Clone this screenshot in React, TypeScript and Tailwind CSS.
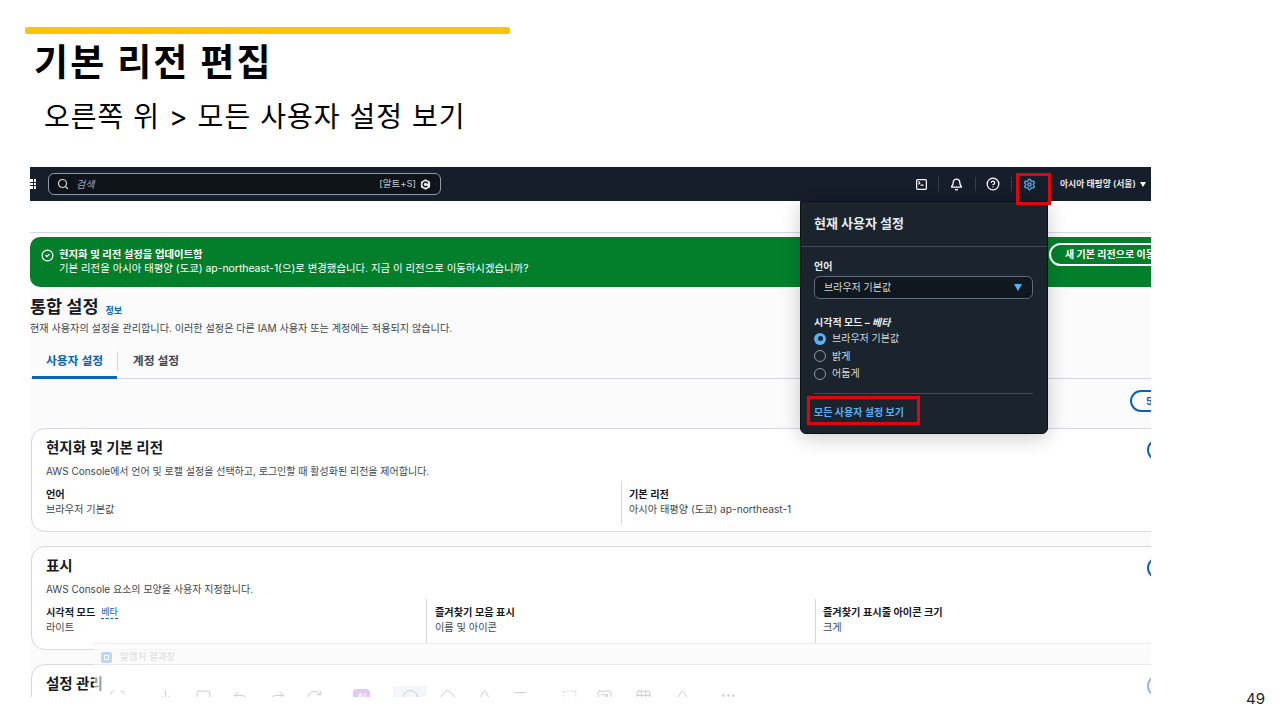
/**
 * Slide: editing the default region, with the AWS console settings screenshot.
 */
import {
  Search,
  SquareTerminal,
  Bell,
  CircleHelp,
  Settings,
  CircleCheck,
  Scan,
  Download,
  Square,
  Undo2,
  Redo2,
  RotateCw,
  Circle,
  Diamond,
  Menu,
  SquareDashed,
  SquareArrowUpRight,
  Grid3x3,
  Triangle,
  Ellipsis,
} from "lucide-react";

const font = "font-['Inter','Noto_Sans_CJK_KR',sans-serif]";

function Field({ label, value, badge }: { label: string; value: string; badge?: string }) {
  return (
    <div className="flex flex-col">
      <div className="flex items-center gap-[6px] text-[10.2px] leading-[14px] font-bold text-[#16191f]">
        {label}
        {badge && (
          <span className="font-normal text-[9px] leading-[12px] text-[#0b5fb0] border-b border-dashed border-[#0b5fb0]">
            {badge}
          </span>
        )}
      </div>
      <div className="mt-[1px] text-[10.2px] leading-[15px] text-[#414750]">{value}</div>
    </div>
  );
}

function Card({
  title,
  desc,
  children,
}: {
  title: string;
  desc?: string;
  children?: React.ReactNode;
}) {
  return (
    <section className="relative ml-[1px] h-[104px] w-[1140px] shrink-0 rounded-[14px] border border-[#d5d8dc] bg-white pl-[14px] pt-[8px]">
      <h3 className="text-[14.5px] leading-[22px] font-bold text-[#16191f]">{title}</h3>
      {desc && <p className="mt-[5px] text-[10px] leading-[14px] text-[#414750]">{desc}</p>}
      {children}
      <span className="absolute left-[1115px] top-[10px] h-[22px] w-[30px] rounded-full border-2 border-[#0b64b5]" />
    </section>
  );
}

function Radio({ label, checked }: { label: string; checked?: boolean }) {
  return (
    <div className="flex h-[17.5px] items-center gap-[6px] text-[10px] text-[#d5dbdb]">
      {checked ? (
        <span className="flex h-[12px] w-[12px] items-center justify-center rounded-full bg-[#54b3f5]">
          <span className="h-[5px] w-[5px] rounded-full bg-[#1b232d]" />
        </span>
      ) : (
        <span className="h-[12px] w-[12px] rounded-full border border-[#8d99a8]" />
      )}
      {label}
    </div>
  );
}

function Popover() {
  return (
    <div className="absolute left-[770px] top-[34px] z-10 h-[233px] w-[248px] rounded-b-[6px] border border-[#0c1118] bg-[#1b232d] text-white shadow-[0_4px_20px_rgba(0,0,0,0.2)]">
      <div className="flex h-[45px] items-center border-b border-[#414d5c] pl-[13px] text-[13px] font-bold text-[#e9ebed]">
        현재 사용자 설정
      </div>
      <div className="px-[13px] pt-[12px]">
        <div className="text-[10px] leading-[14px] font-bold text-[#e9ebed]">언어</div>
        <div className="mt-[3px] flex h-[23px] w-[219px] items-center justify-between rounded-[6px] border border-[#5f6b7a] bg-[#10171f] pl-[9px] pr-[10px] text-[10px] text-[#d5dbdb]">
          브라우저 기본값
          <span className="h-0 w-0 border-x-[4.5px] border-t-[7px] border-x-transparent border-t-[#54b3f5]" />
        </div>
        <div className="mt-[16px] text-[10px] leading-[14px] font-bold text-[#e9ebed]">
          시각적 모드 – <span className="italic">베타</span>
        </div>
        <div className="mt-[1px]">
          <Radio label="브라우저 기본값" checked />
          <Radio label="밝게" />
          <Radio label="어둡게" />
        </div>
        <div className="mt-[10px] w-[219px] border-t border-[#414d5c] pt-[11px] text-[10px] leading-[14px] font-bold text-[#54b3f5]">
          모든 사용자 설정 보기
        </div>
      </div>
    </div>
  );
}

function TopBar() {
  return (
    <header className="flex h-[34px] shrink-0 items-center bg-[#161d2b] text-white">
      <div className="grid w-[6px] grid-cols-2 gap-[1px]">
        {Array.from({ length: 6 }).map((_, i) => (
          <span key={i} className="h-[2.5px] w-[2.5px] bg-white" />
        ))}
      </div>
      <div className="ml-[12px] flex h-[22px] w-[393px] items-center rounded-[6px] border border-[#8d99a8] bg-[#0f141a] pl-[8px] pr-[9px]">
        <Search className="h-[12px] w-[12px] text-[#d5dbdb]" strokeWidth={2.4} />
        <span className="ml-[7px] text-[10px] italic text-[#9ba7b6]">검색</span>
        <span className="ml-auto text-[9.5px] text-[#c6c9cc]">[알트+S]</span>
        <svg viewBox="0 0 12 12" className="ml-[4px] h-[11px] w-[11px]">
          <path d="M6 0.3 11 3v6l-5 2.7L1 9V3z" fill="#e9ebed" />
          <path d="M8 7.6A2.6 2.6 0 1 1 8.4 5" fill="none" stroke="#0f141a" strokeWidth="1.6" />
        </svg>
      </div>
      <SquareTerminal className="ml-[474px] h-[13px] w-[13px]" strokeWidth={2.2} />
      <span className="ml-[10px] h-[14px] w-px bg-[#333c49]" />
      <Bell className="ml-[11px] h-[13px] w-[13px]" strokeWidth={2.4} />
      <span className="ml-[12px] h-[14px] w-px bg-[#333c49]" />
      <CircleHelp className="ml-[10px] h-[14px] w-[14px]" strokeWidth={2.2} />
      <span className="ml-[11px] h-[14px] w-px bg-[#333c49]" />
      <Settings className="ml-[11px] h-[13px] w-[13px] text-[#54b3f5]" strokeWidth={2.4} />
      <span className="ml-[24px] text-[8.8px] font-semibold text-[#e9ebed]">아시아 태평양 (서울)</span>
      <span className="ml-[4px] h-0 w-0 border-x-[3.5px] border-t-[5px] border-x-transparent border-t-white" />
    </header>
  );
}

function Toolbar() {
  const cls = "h-[17px] w-[17px]";
  return (
    <div className="absolute left-[64px] top-[476px] z-[5] h-[70px] w-[1057px] border-t border-[#ececec] bg-white/55">
      <div className="flex h-[21px] items-center border-b border-[#e9e9e9] bg-[#fafafa]/60 pl-[7px] pt-[7px]">
        <span className="flex h-[11px] w-[11px] items-center justify-center rounded-[2px] bg-[#bcd6f3]">
          <span className="h-[5px] w-[5px] border border-white" />
        </span>
        <span className="ml-[8px] text-[9.5px] text-[#dcdcdc]">알캡처 결과창</span>
      </div>
      <div className="flex items-center pl-[15px] pt-[21px] text-[#c9c9c9]">
        <Scan className={cls} strokeWidth={1.3} />
        <Download className={`${cls} ml-[31px]`} strokeWidth={1.3} />
        <Square className={`${cls} ml-[21px]`} strokeWidth={1.3} />
        <Undo2 className={`${cls} ml-[20px]`} strokeWidth={1.3} />
        <Redo2 className={`${cls} ml-[20px]`} strokeWidth={1.3} />
        <RotateCw className={`${cls} ml-[20px]`} strokeWidth={1.3} />
        <span className="ml-[30px] flex h-[17px] w-[17px] items-center justify-center rounded-[4px] bg-[#e2c8f7] text-[9px] font-bold text-white">
          Ai
        </span>
        <span className="ml-[23px] flex h-[22px] w-[34px] items-center justify-center bg-[#f3f7fb]">
          <Circle className={cls} strokeWidth={1.3} />
        </span>
        <Diamond className={`${cls} ml-[12px]`} strokeWidth={1.3} />
        <Triangle className={`${cls} ml-[20px]`} strokeWidth={1.3} />
        <Menu className={`${cls} ml-[19px]`} strokeWidth={1.3} />
        <SquareDashed className={`${cls} ml-[32px]`} strokeWidth={1.3} />
        <SquareArrowUpRight className={`${cls} ml-[18px]`} strokeWidth={1.3} />
        <Grid3x3 className={`${cls} ml-[22px]`} strokeWidth={1.3} />
        <Triangle className={`${cls} ml-[22px]`} strokeWidth={1.3} />
        <Ellipsis className={`${cls} ml-[29px] -mt-[4px]`} strokeWidth={1.5} />
      </div>
    </div>
  );
}

function ConsoleShot() {
  return (
    <div className="relative ml-[30px] flex h-[530px] w-[1121px] flex-col overflow-hidden bg-[#fbfbfb]">
      <TopBar />
      <div className="h-[32px] shrink-0 border-b border-[#d5d8dc] bg-white" />
      <div className="mt-[4px] flex h-[50px] w-[1121px] shrink-0 items-start rounded-l-[10px] bg-[#037f2c] pl-[11px] pt-[11px] text-white">
        <CircleCheck className="mt-[1px] h-[13px] w-[13px]" strokeWidth={2.2} />
        <div className="ml-[5px] text-[10.4px] leading-[14px]">
          <div className="font-bold">현지화 및 리전 설정을 업데이트함</div>
          <div>기본 리전을 아시아 태평양 (도쿄) ap-northeast-1(으)로 변경했습니다. 지금 이 리전으로 이동하시겠습니까?</div>
        </div>
        <span className="ml-auto mt-[-5px] mr-[-58px] flex h-[23px] w-[160px] items-center whitespace-nowrap rounded-full border-2 border-white pl-[14px] text-[10px] font-bold">
          새 기본 리전으로 이동
        </span>
      </div>
      <div className="flex h-[33px] shrink-0 items-end gap-[7px] pb-[1px]">
        <h1 className="text-[17.5px] leading-[24px] font-bold text-[#16191f]">통합 설정</h1>
        <span className="pb-[2px] text-[9px] font-bold text-[#0b64b5]">정보</span>
      </div>
      <p className="mt-[1px] text-[10.15px] leading-[15px] text-[#414750]">
        현재 사용자의 설정을 관리합니다. 이러한 설정은 다른 IAM 사용자 또는 계정에는 적용되지 않습니다.
      </p>
      <nav className="mt-[12px] flex h-[31px] shrink-0 items-start border-b border-[#d5d8dc] text-[11.8px] font-semibold">
        <div className="ml-[2px] flex h-[31px] w-[85px] items-center justify-center border-b-[3px] border-[#0b64b5] text-[#0b64b5]">
          사용자 설정
        </div>
        <span className="mt-[3px] h-[20px] w-px bg-[#d5d8dc]" />
        <div className="flex h-[28px] w-[76px] items-center justify-center text-[#414750]">계정 설정</div>
      </nav>
      <div className="flex h-[49px] shrink-0 items-start justify-end pt-[11px]">
        <span className="mr-[-30px] flex h-[22px] w-[51px] items-center rounded-full border-2 border-[#0b64b5] pl-[14px] text-[10px] font-bold text-[#0b64b5]">
          5
        </span>
      </div>
      <div className="flex flex-col">
        <Card
          title="현지화 및 기본 리전"
          desc="AWS Console에서 언어 및 로캘 설정을 선택하고, 로그인할 때 활성화된 리전을 제어합니다."
        >
          <div className="mt-[9px] flex">
            <div className="w-[575px]">
              <Field label="언어" value="브라우저 기본값" />
            </div>
            <div className="-mt-[6px] h-[44px] w-px bg-[#d5d8dc]" />
            <div className="pl-[7px]">
              <Field label="기본 리전" value="아시아 태평양 (도쿄) ap-northeast-1" />
            </div>
          </div>
        </Card>
        <div className="h-[14px] shrink-0" />
        <Card title="표시" desc="AWS Console 요소의 모양을 사용자 지정합니다.">
          <div className="mt-[9px] flex">
            <div className="w-[380px]">
              <Field label="시각적 모드" value="라이트" badge="베타" />
            </div>
            <div className="-mt-[6px] h-[44px] w-px bg-[#d5d8dc]" />
            <div className="w-[388px] pl-[8px]">
              <Field label="즐겨찾기 모음 표시" value="이름 및 아이콘" />
            </div>
            <div className="-mt-[6px] h-[44px] w-px bg-[#d5d8dc]" />
            <div className="pl-[7px]">
              <Field label="즐겨찾기 표시줄 아이콘 크기" value="크게" />
            </div>
          </div>
        </Card>
        <div className="h-[14px] shrink-0" />
        <Card title="설정 관리" />
      </div>
      <Popover />
      {/* red highlight boxes drawn on top of the screenshot */}
      <div className="absolute left-[986px] top-[6px] z-20 h-[32px] w-[35px] border-[3px] border-[#e0060f]" />
      <div className="absolute left-[777px] top-[229px] z-20 h-[29px] w-[113px] border-[3px] border-[#e0060f]" />
      <Toolbar />
    </div>
  );
}

export default function App() {
  return (
    <div className={`relative h-[720px] w-[1280px] overflow-hidden bg-white ${font}`}>
      <div className="pt-[27px]">
        <div className="ml-[25px] h-[7px] w-[485px] rounded-[2px] bg-[#fdc20c]" />
        <h1 className="ml-[34px] mt-[4px] text-[37px] leading-[50px] font-bold tracking-[2.1px] text-black">
          기본 리전 편집
        </h1>
        <p className="ml-[44px] mt-[9px] text-[28px] leading-[40px] tracking-[1.05px] text-black">
          오른쪽 위 &gt; 모든 사용자 설정 보기
        </p>
      </div>
      <div className="mt-[30px]">
        <ConsoleShot />
      </div>
      <span className="absolute left-[1246px] top-[689px] text-[15px] leading-[20px] text-[#222]">49</span>
    </div>
  );
}
